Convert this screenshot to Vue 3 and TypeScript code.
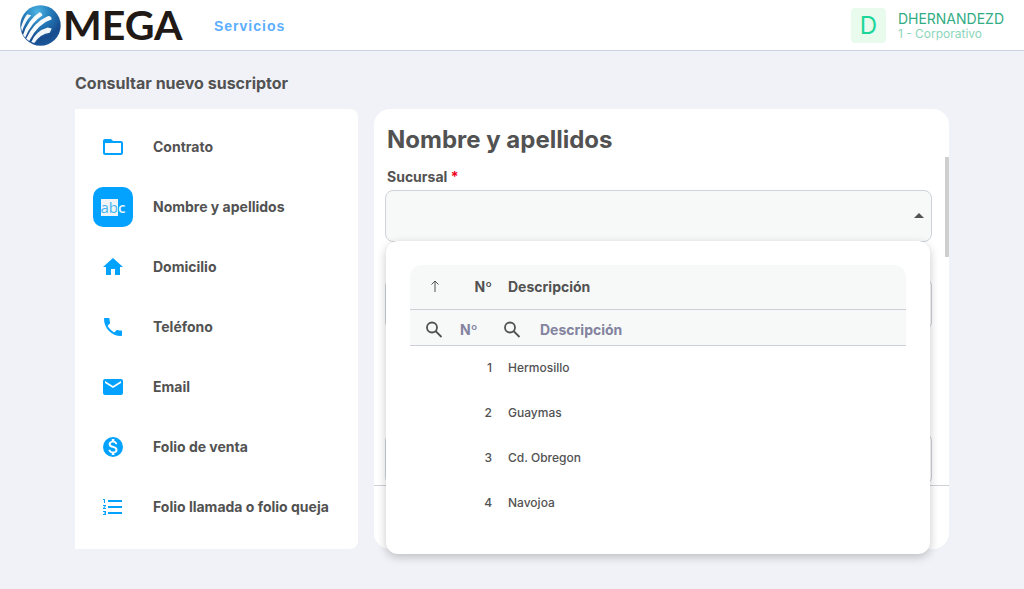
<script setup lang="ts">
import { computed, ref } from 'vue'

interface SearchMode {
  id: string
  label: string
  path: string
}

interface Branch {
  id: number
  name: string
}

const modes: SearchMode[] = [
  { id: 'contract', label: 'Contrato', path: 'M20 18H4V8h16m0-2h-8l-2-2H4c-1.11 0-2 .89-2 2v12a2 2 0 0 0 2 2h16a2 2 0 0 0 2-2V8c0-1.11-.9-2-2-2z' },
  { id: 'name', label: 'Nombre y apellidos', path: '' },
  { id: 'address', label: 'Domicilio', path: 'M10 20v-6h4v6h5v-8h3L12 3 2 12h3v8z' },
  { id: 'phone', label: 'Teléfono', path: 'M6.62 10.79c1.44 2.83 3.76 5.14 6.59 6.59l2.2-2.2c.27-.27.67-.36 1.02-.24 1.12.37 2.33.57 3.57.57.55 0 1 .45 1 1V20c0 .55-.45 1-1 1-9.39 0-17-7.61-17-17 0-.55.45-1 1-1h3.5c.55 0 1 .45 1 1 0 1.25.2 2.45.57 3.57.11.35.03.74-.25 1.02l-2.2 2.2z' },
  { id: 'email', label: 'Email', path: 'M20 4H4a2 2 0 0 0-2 2v12a2 2 0 0 0 2 2h16a2 2 0 0 0 2-2V6a2 2 0 0 0-2-2zm0 4l-8 5-8-5V6l8 5 8-5z' },
  { id: 'sale', label: 'Folio de venta', path: 'M12 2a10 10 0 1 0 0 20 10 10 0 0 0 0-20zm1.41 16.09V20h-2.67v-1.93c-1.71-.36-3.16-1.46-3.27-3.4h1.96c.1 1.05.82 1.87 2.65 1.87 1.96 0 2.4-.98 2.4-1.59 0-.83-.44-1.61-2.67-2.14-2.48-.6-4.18-1.62-4.18-3.67 0-1.72 1.39-2.84 3.11-3.21V4h2.67v1.95c1.86.45 2.79 1.86 2.85 3.39H14.3c-.05-1.11-.64-1.87-2.22-1.87-1.5 0-2.4.68-2.4 1.64 0 .84.65 1.39 2.67 1.91s4.18 1.39 4.18 3.91c-.01 1.83-1.38 2.83-3.12 3.16z' },
  { id: 'call', label: 'Folio llamada o folio queja', path: 'M7 5h14v2H7zm0 6h14v2H7zm0 6h14v2H7zM2 16h3v4H2v-1h2v-.5H3v-1h1V17H2zM3 4h1v4H3V5H2V4zm-1 6h3v.9L3.2 13H5v1H2v-.9L3.8 11H2z' },
]

const branches: Branch[] = [
  { id: 1, name: 'Hermosillo' },
  { id: 2, name: 'Guaymas' },
  { id: 3, name: 'Cd. Obregon' },
  { id: 4, name: 'Navojoa' },
]

const active = ref('name')
const open = ref(true)
const selected = ref('')
const idFilter = ref('')
const nameFilter = ref('')

const visibleBranches = computed(() =>
  branches.filter(
    (b) =>
      String(b.id).includes(idFilter.value) &&
      b.name.toLowerCase().includes(nameFilter.value.toLowerCase()),
  ),
)

function choose(branch: Branch) {
  selected.value = String(branch.id)
  open.value = false
}
</script>

<template>
  <header class="topbar">
    <a class="brand" href="#" aria-label="MEGA">
      <svg class="globe" viewBox="0 0 40 40" aria-hidden="true">
        <defs>
          <radialGradient id="sphere" cx="0.42" cy="0.16" r="0.88">
            <stop offset="0" stop-color="#4db5e3" />
            <stop offset="0.35" stop-color="#2580bd" />
            <stop offset="0.75" stop-color="#174b8d" />
            <stop offset="1" stop-color="#1d5a9c" />
          </radialGradient>
        </defs>
        <circle cx="20" cy="20" r="19.7" fill="url(#sphere)" />
        <path d="M1 22Q3 14 7 9L11 10Q5 16 2 26Z" fill="#f4f7fa" />
        <path d="M3 29Q8 14 19 7Q21 7 22 10Q11 17 5 32Z" fill="#f8fafc" />
        <path d="M6 33Q13 17 27 11Q30 10 31 14Q18 18 9 35Z" fill="#f8fafc" />
        <path d="M11 36Q16 25 27 22L31 23L29 27Q20 28 14 37Z" fill="#f1f6fa" />
      </svg>
      <span class="wordmark">MEGA</span>
    </a>
    <nav><a class="nav-link" href="#">Servicios</a></nav>
    <div class="user">
      <span class="avatar">D</span>
      <div class="user-text">
        <span class="user-name">DHERNANDEZD</span>
        <span class="user-role">1 - Corporativo</span>
      </div>
    </div>
  </header>

  <main class="page">
    <h1 class="page-title">Consultar nuevo suscriptor</h1>
    <div class="columns">
      <aside class="modes">
        <button
          v-for="mode in modes"
          :key="mode.id"
          type="button"
          class="mode"
          :class="{ active: mode.id === active }"
          @click="active = mode.id"
        >
          <span class="mode-icon">
            <svg v-if="mode.path" viewBox="0 0 24 24" aria-hidden="true"><path :d="mode.path" /></svg>
            <span v-else class="abc"><span class="ab">ab</span>c</span>
          </span>
          <span class="mode-label">{{ mode.label }}</span>
        </button>
      </aside>

      <section class="panel">
        <h2 class="panel-title">Nombre y apellidos</h2>
        <form class="form" @submit.prevent>
          <label class="label" for="branch">Sucursal <span class="required">*</span></label>
          <div class="select-wrap">
            <select id="branch" v-model="selected" class="select" @mousedown.prevent="open = !open">
              <option value=""></option>
              <option v-for="b in branches" :key="b.id" :value="String(b.id)">{{ b.name }}</option>
            </select>
            <svg class="caret" viewBox="0 0 10 5" aria-hidden="true"><path d="M0 5 5 0l5 5z" /></svg>
            <div v-if="open" class="popup">
              <table class="grid">
                <colgroup><col class="col-id" /><col /></colgroup>
                <thead>
                  <tr class="head-row">
                    <th scope="col">
                      <div class="id-head">
                        <svg class="sort" viewBox="0 0 10 12" aria-hidden="true"><path d="M5 12V1M1.500 4.500 5 1l3.500 3.500" /></svg>
                        <span>Nº</span>
                      </div>
                    </th>
                    <th scope="col">Descripción</th>
                  </tr>
                  <tr class="filter-row">
                    <td>
                      <label class="filter filter-id">
                        <svg viewBox="0 0 18 18" aria-hidden="true"><circle cx="7" cy="6.500" r="5" /><path d="m10.500 10 6 6" /></svg>
                        <input v-model="idFilter" type="text" placeholder="Nº" aria-label="Nº" />
                      </label>
                    </td>
                    <td>
                      <label class="filter">
                        <svg viewBox="0 0 18 18" aria-hidden="true"><circle cx="7" cy="6.500" r="5" /><path d="m10.500 10 6 6" /></svg>
                        <input v-model="nameFilter" type="text" placeholder="Descripción" aria-label="Descripción" />
                      </label>
                    </td>
                  </tr>
                </thead>
                <tbody>
                  <tr v-for="b in visibleBranches" :key="b.id" @click="choose(b)">
                    <td class="num">{{ b.id }}</td>
                    <td>{{ b.name }}</td>
                  </tr>
                </tbody>
              </table>
            </div>
          </div>
          <input class="text-box" type="text" aria-label="Nombre" />
          <input class="text-box last" type="text" aria-label="Apellidos" />
          <div class="scroll-thumb"></div>
        </form>
        <footer class="panel-footer"></footer>
      </section>
    </div>
  </main>
</template>

<style>
body {
  margin: 0;
  background: #f1f2f7;
}
</style>

<style scoped>
* {
  box-sizing: border-box;
}

.topbar,
.page {
  font-family: Inter, "Liberation Sans", sans-serif;
  color: #525252;
}

.topbar {
  display: flex;
  align-items: center;
  height: 51px;
  padding: 0 20px;
  background: #fff;
  border-bottom: 1px solid #cbd2df;
}

.brand {
  display: flex;
  align-items: center;
  gap: 2px;
  width: 194px;
  color: #211915;
  text-decoration: none;
}

.globe {
  width: 41px;
  height: 41px;
}

.wordmark {
  font: 700 41px/48px Lato, sans-serif;
}

.nav-link {
  color: #5caeff;
  font: 700 14px/20px "Liberation Sans", sans-serif;
  letter-spacing: 1px;
  text-decoration: none;
}

.user {
  display: flex;
  align-items: center;
  gap: 12px;
  margin-left: auto;
}

.avatar {
  width: 35px;
  height: 35px;
  border-radius: 4px;
  background: #e8fbed;
  color: #1bd699;
  font-size: 24px;
  line-height: 36px;
  text-align: center;
}

.user-text {
  display: flex;
  flex-direction: column;
  padding-top: 2px;
}

.user-name {
  color: #31ac84;
  font-size: 14px;
  line-height: 16px;
}

.user-role {
  color: #8bd6ba;
  font-size: 12px;
  line-height: 14px;
}

.page {
  padding: 20px 75px;
}

.page-title {
  margin: 0 0 14px;
  font-size: 16px;
  line-height: 24px;
  font-weight: 700;
}

.columns {
  display: grid;
  grid-template-columns: 283px minmax(0, 1fr);
  gap: 16px;
}

.modes {
  padding: 8px 0 12px;
  background: #fff;
  border-radius: 0 8px 8px 0;
}

.mode {
  display: flex;
  align-items: center;
  gap: 20px;
  width: 100%;
  height: 60px;
  padding: 0 18px;
  border: 0;
  background: none;
  color: inherit;
  font: inherit;
  font-size: 14px;
  font-weight: 700;
  white-space: nowrap;
  cursor: pointer;
}

.mode-label {
  padding-bottom: 2px;
}

.mode-icon {
  display: flex;
  align-items: center;
  justify-content: center;
  width: 40px;
  height: 40px;
  border-radius: 10px;
}

.mode-icon svg {
  width: 24px;
  height: 24px;
  fill: #03a2ff;
}

.active .mode-icon {
  background: #03a2ff;
}

.abc {
  display: flex;
  color: #e9f4fc;
  font: 600 15px/17px "Open Sans", sans-serif;
}

.ab {
  background: #f0f4f6;
  color: #43b5f5;
  font-weight: 400;
}

.panel {
  display: flex;
  flex-direction: column;
  padding-top: 12px;
  background: #fff;
  border-radius: 16px;
}

.panel-title {
  margin: 0;
  padding: 1px 13px 0;
  font-size: 24px;
  line-height: 35px;
  font-weight: 700;
}

.form {
  position: relative;
  display: flex;
  flex: 1;
  flex-direction: column;
  padding: 8px 17px 0 11px;
}

.label {
  padding: 0 0 1px 2px;
  font-size: 14px;
  line-height: 24px;
  font-weight: 700;
}

.required {
  color: #f00020;
}

.select-wrap {
  position: relative;
  z-index: 1;
}

.select {
  display: block;
  width: 100%;
  height: 52px;
  padding: 0 16px;
  border: 1px solid #ced3d9;
  border-radius: 8px;
  background: #f7f9f8;
  color: inherit;
  font: inherit;
  font-size: 14px;
  appearance: none;
}

.caret {
  position: absolute;
  top: 23px;
  right: 8px;
  width: 10px;
  height: 5px;
  fill: #525252;
  pointer-events: none;
}

.text-box {
  height: 52px;
  margin-top: 36px;
  border: 1px solid #ced3d9;
  border-radius: 8px;
}

.last {
  margin-top: 103px;
}

.scroll-thumb {
  position: absolute;
  top: 0;
  right: 0;
  width: 4px;
  height: 100px;
  background: #cfcfcf;
}

.panel-footer {
  height: 64px;
  border-top: 1px solid #ced0d8;
}

.popup {
  position: absolute;
  top: 51px;
  left: 1px;
  right: 2px;
  padding: 24px 24px 28px;
  border-radius: 12px;
  background: #fff;
  box-shadow: 0 3px 10px rgba(0, 0, 0, 0.22);
}

.grid {
  width: 100%;
  border-collapse: separate;
  border-spacing: 0;
  table-layout: fixed;
  font-size: 12px;
  font-weight: 500;
}

.col-id {
  width: 90px;
}

.grid th,
.grid td {
  height: 45px;
  padding: 0 8px 2px;
  text-align: left;
}

.grid thead th,
.grid thead td {
  background: #f7f9f8;
  border-bottom: 1px solid #ced0d8;
}

.grid th {
  font-size: 14px;
  font-weight: 700;
}

.head-row th:first-child {
  border-top-left-radius: 12px;
}

.head-row th:last-child {
  border-top-right-radius: 12px;
}

.id-head {
  display: flex;
  align-items: center;
  justify-content: space-between;
  padding-left: 12px;
}

.sort {
  width: 10px;
  height: 12px;
  fill: none;
  stroke: #525252;
}

.grid .filter-row td {
  height: 36px;
  padding: 0 0 0 3px;
}

.filter {
  display: flex;
  align-items: center;
  gap: 19px;
  padding-top: 4px;
}

.grid .filter-id {
  gap: 17px;
  padding-left: 12px;
}

.filter svg {
  flex: none;
  width: 18px;
  height: 18px;
  fill: none;
  stroke: #525252;
  stroke-width: 1.800;
}

.filter input {
  width: 100%;
  min-width: 0;
  padding: 0;
  border: 0;
  outline: 0;
  background: none;
  color: #525252;
  font: inherit;
  font-size: 14px;
  font-weight: 700;
}

.filter input::placeholder {
  color: #83839f;
  opacity: 1;
}

.grid .num {
  text-align: right;
}

tbody tr {
  cursor: pointer;
}
</style>
